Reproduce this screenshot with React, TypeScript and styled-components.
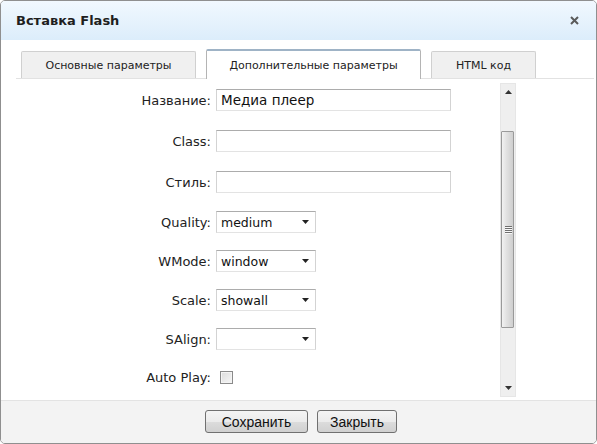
import React from "react";
import styled, { createGlobalStyle } from "styled-components";

const GlobalStyle = createGlobalStyle`
  html, body {
    margin: 0;
    padding: 0;
    background: #ffffff;
  }
  * {
    box-sizing: border-box;
  }
`;

const Dialog = styled.div`
  width: 597px;
  height: 444px;
  border: 1px solid #8f8f8f;
  border-radius: 5px;
  overflow: hidden;
  display: flex;
  flex-direction: column;
  background: #ffffff;
  font-family: "DejaVu Sans", Verdana, sans-serif;
  color: #222222;
`;

const Header = styled.div`
  height: 39px;
  flex: none;
  display: flex;
  align-items: center;
  justify-content: space-between;
  padding: 0 15px 0 15px;
  background: linear-gradient(to bottom, #f1f8fe 0%, #dcedfb 100%);
`;

const Title = styled.h1`
  margin: 0;
  font-size: 13px;
  font-weight: bold;
  color: #1e1e1e;
`;

const CloseButton = styled.button`
  border: none;
  background: none;
  padding: 0;
  width: 14px;
  height: 14px;
  display: flex;
  align-items: center;
  justify-content: center;
  cursor: pointer;
`;

const Body = styled.div`
  flex: 1;
  display: flex;
  flex-direction: column;
  padding: 9px 2px 0 15px;
`;

const TabBar = styled.div`
  display: flex;
  align-items: flex-end;
  gap: 10px;
  padding-left: 5px;
  border-bottom: 1px solid #e2e2e2;
  height: 30px;
`;

const Tab = styled.div<{ $active?: boolean; $w: number }>`
  width: ${(p) => p.$w}px;
  height: ${(p) => (p.$active ? 30 : 27)}px;
  margin-bottom: ${(p) => (p.$active ? -1 : 0)}px;
  display: flex;
  align-items: center;
  justify-content: center;
  font-size: 11px;
  color: #222;
  background: ${(p) => (p.$active ? "#ffffff" : "#f0f0f0")};
  border: 1px solid ${(p) => (p.$active ? "#b4b4b4" : "#d0d0d0")};
  border-top: ${(p) => (p.$active ? "2px solid #9fb3c6" : "1px solid #d0d0d0")};
  border-bottom: none;
  border-radius: 2px 2px 0 0;
  padding-top: ${(p) => (p.$active ? 0 : 1)}px;
`;

const Content = styled.div`
  height: 321px;
  display: flex;
  padding: 4px 0 3px 0;
`;

const Form = styled.div`
  width: 484px;
  padding-top: 6px;
  display: flex;
  flex-direction: column;
`;

const Row = styled.div<{ $h: number }>`
  height: ${(p) => p.$h}px;
  display: flex;
  align-items: flex-start;
  gap: 5px;
`;

const Label = styled.label`
  width: 195px;
  height: 22px;
  display: flex;
  align-items: center;
  justify-content: flex-end;
  font-size: 13px;
  color: #222;
`;

const TextInput = styled.input`
  width: 235px;
  height: 22px;
  border: 1px solid #d3d3d3;
  border-top-color: #acacac;
  border-bottom-color: #e3e3e3;
  padding: 0 4px;
  font-family: "DejaVu Sans", Verdana, sans-serif;
  font-size: 13.5px;
  color: #111;
  outline: none;
`;

const SelectBox = styled.div`
  width: 100px;
  height: 22px;
  border: 1px solid #d3d3d3;
  border-top-color: #acacac;
  border-bottom-color: #e3e3e3;
  display: flex;
  align-items: center;
  justify-content: space-between;
  padding: 0 6px 0 4px;
  font-size: 12.5px;
  color: #111;
`;

const CheckRow = styled.div`
  height: 22px;
  display: flex;
  align-items: center;
  padding-left: 4px;
`;

const CheckBox = styled.span`
  width: 13px;
  height: 13px;
  border: 1px solid #8a8a8a;
  background: linear-gradient(135deg, #dcdcdc 0%, #f6f6f6 100%);
  box-shadow: inset 0 0 0 1px #f4f4f4;
`;

const ScrollTrack = styled.div`
  width: 16px;
  height: 100%;
  display: flex;
  flex-direction: column;
  background: #efefef;
  border: 1px solid #e6e6e6;
`;

const ScrollArrow = styled.div`
  height: 16px;
  flex: none;
  display: flex;
  align-items: center;
  justify-content: center;
`;

const ScrollSpace = styled.div<{ $h: number }>`
  height: ${(p) => p.$h}px;
  flex: none;
`;

const ScrollThumb = styled.div`
  height: 197px;
  flex: none;
  margin: 0 1px 0 0;
  border: 1px solid #9a9a9a;
  border-radius: 1px;
  background: linear-gradient(to right, #f2f2f2 0%, #e2e2e2 40%, #cfcfcf 100%);
  display: flex;
  align-items: center;
  justify-content: center;
`;

const Grip = styled.div`
  width: 7px;
  display: flex;
  flex-direction: column;
  gap: 1px;
  margin-left: 2px;
`;

const GripLine = styled.span`
  height: 1px;
  background: #6f6f6f;
  box-shadow: 0 1px 0 #f8f8f8;
`;

const Footer = styled.div`
  height: 43px;
  flex: none;
  border-top: 1px solid #e3e3e3;
  background: #f3f3f3;
  display: flex;
  justify-content: center;
  align-items: flex-start;
  gap: 9px;
  padding: 9px 0 0 5px;
`;

const Button = styled.button<{ $w: number }>`
  width: ${(p) => p.$w}px;
  height: 23px;
  border: 1px solid #707070;
  border-radius: 3px;
  background: linear-gradient(to bottom, #f4f4f4 0%, #ebebeb 50%, #dcdcdc 51%, #d0d0d0 100%);
  font-family: "Liberation Sans", Arial, sans-serif;
  font-size: 14px;
  color: #111;
  padding: 0;
  cursor: pointer;
`;

const Arrow: React.FC<{ up?: boolean; color?: string }> = ({ up, color = "#222" }) => (
  <svg width="7" height="4" viewBox="0 0 7 4">
    <path d={up ? "M0 4 L3.5 0 L7 4 Z" : "M0 0 L7 0 L3.5 4 Z"} fill={color} />
  </svg>
);

type Field =
  | { kind: "text"; label: string; value?: string; h: number }
  | { kind: "select"; label: string; value: string; h: number }
  | { kind: "check"; label: string; h: number };

const fields: Field[] = [
  { kind: "text", label: "Название:", value: "Медиа плеер", h: 41 },
  { kind: "text", label: "Class:", h: 41 },
  { kind: "text", label: "Стиль:", h: 40 },
  { kind: "select", label: "Quality:", value: "medium", h: 39 },
  { kind: "select", label: "WMode:", value: "window", h: 39 },
  { kind: "select", label: "Scale:", value: "showall", h: 39 },
  { kind: "select", label: "SAlign:", value: "", h: 38 },
  { kind: "check", label: "Auto Play:", h: 30 },
];

export default function App() {
  return (
    <>
      <GlobalStyle />
      <Dialog>
        <Header>
          <Title>Вставка Flash</Title>
          <CloseButton aria-label="close">
            <svg width="9" height="9" viewBox="0 0 9 9">
              <path d="M1 1 L8 8 M8 1 L1 8" stroke="#5a5a5a" strokeWidth="2" />
            </svg>
          </CloseButton>
        </Header>
        <Body>
          <TabBar>
            <Tab $w={175}>Основные параметры</Tab>
            <Tab $w={215} $active>
              Дополнительные параметры
            </Tab>
            <Tab $w={105}>HTML код</Tab>
          </TabBar>
          <Content>
            <Form>
              {fields.map((f) => (
                <Row key={f.label} $h={f.h}>
                  <Label>{f.label}</Label>
                  {f.kind === "text" && <TextInput defaultValue={f.value ?? ""} />}
                  {f.kind === "select" && (
                    <SelectBox>
                      <span>{f.value}</span>
                      <Arrow />
                    </SelectBox>
                  )}
                  {f.kind === "check" && (
                    <CheckRow>
                      <CheckBox />
                    </CheckRow>
                  )}
                </Row>
              ))}
            </Form>
            <ScrollTrack>
              <ScrollArrow>
                <Arrow up color="#333" />
              </ScrollArrow>
              <ScrollSpace $h={31} />
              <ScrollThumb>
                <Grip>
                  <GripLine />
                  <GripLine />
                  <GripLine />
                  <GripLine />
                </Grip>
              </ScrollThumb>
              <ScrollSpace $h={52} />
              <ScrollArrow>
                <Arrow color="#333" />
              </ScrollArrow>
            </ScrollTrack>
          </Content>
        </Body>
        <Footer>
          <Button $w={103}>Сохранить</Button>
          <Button $w={80}>Закрыть</Button>
        </Footer>
      </Dialog>
    </>
  );
}
